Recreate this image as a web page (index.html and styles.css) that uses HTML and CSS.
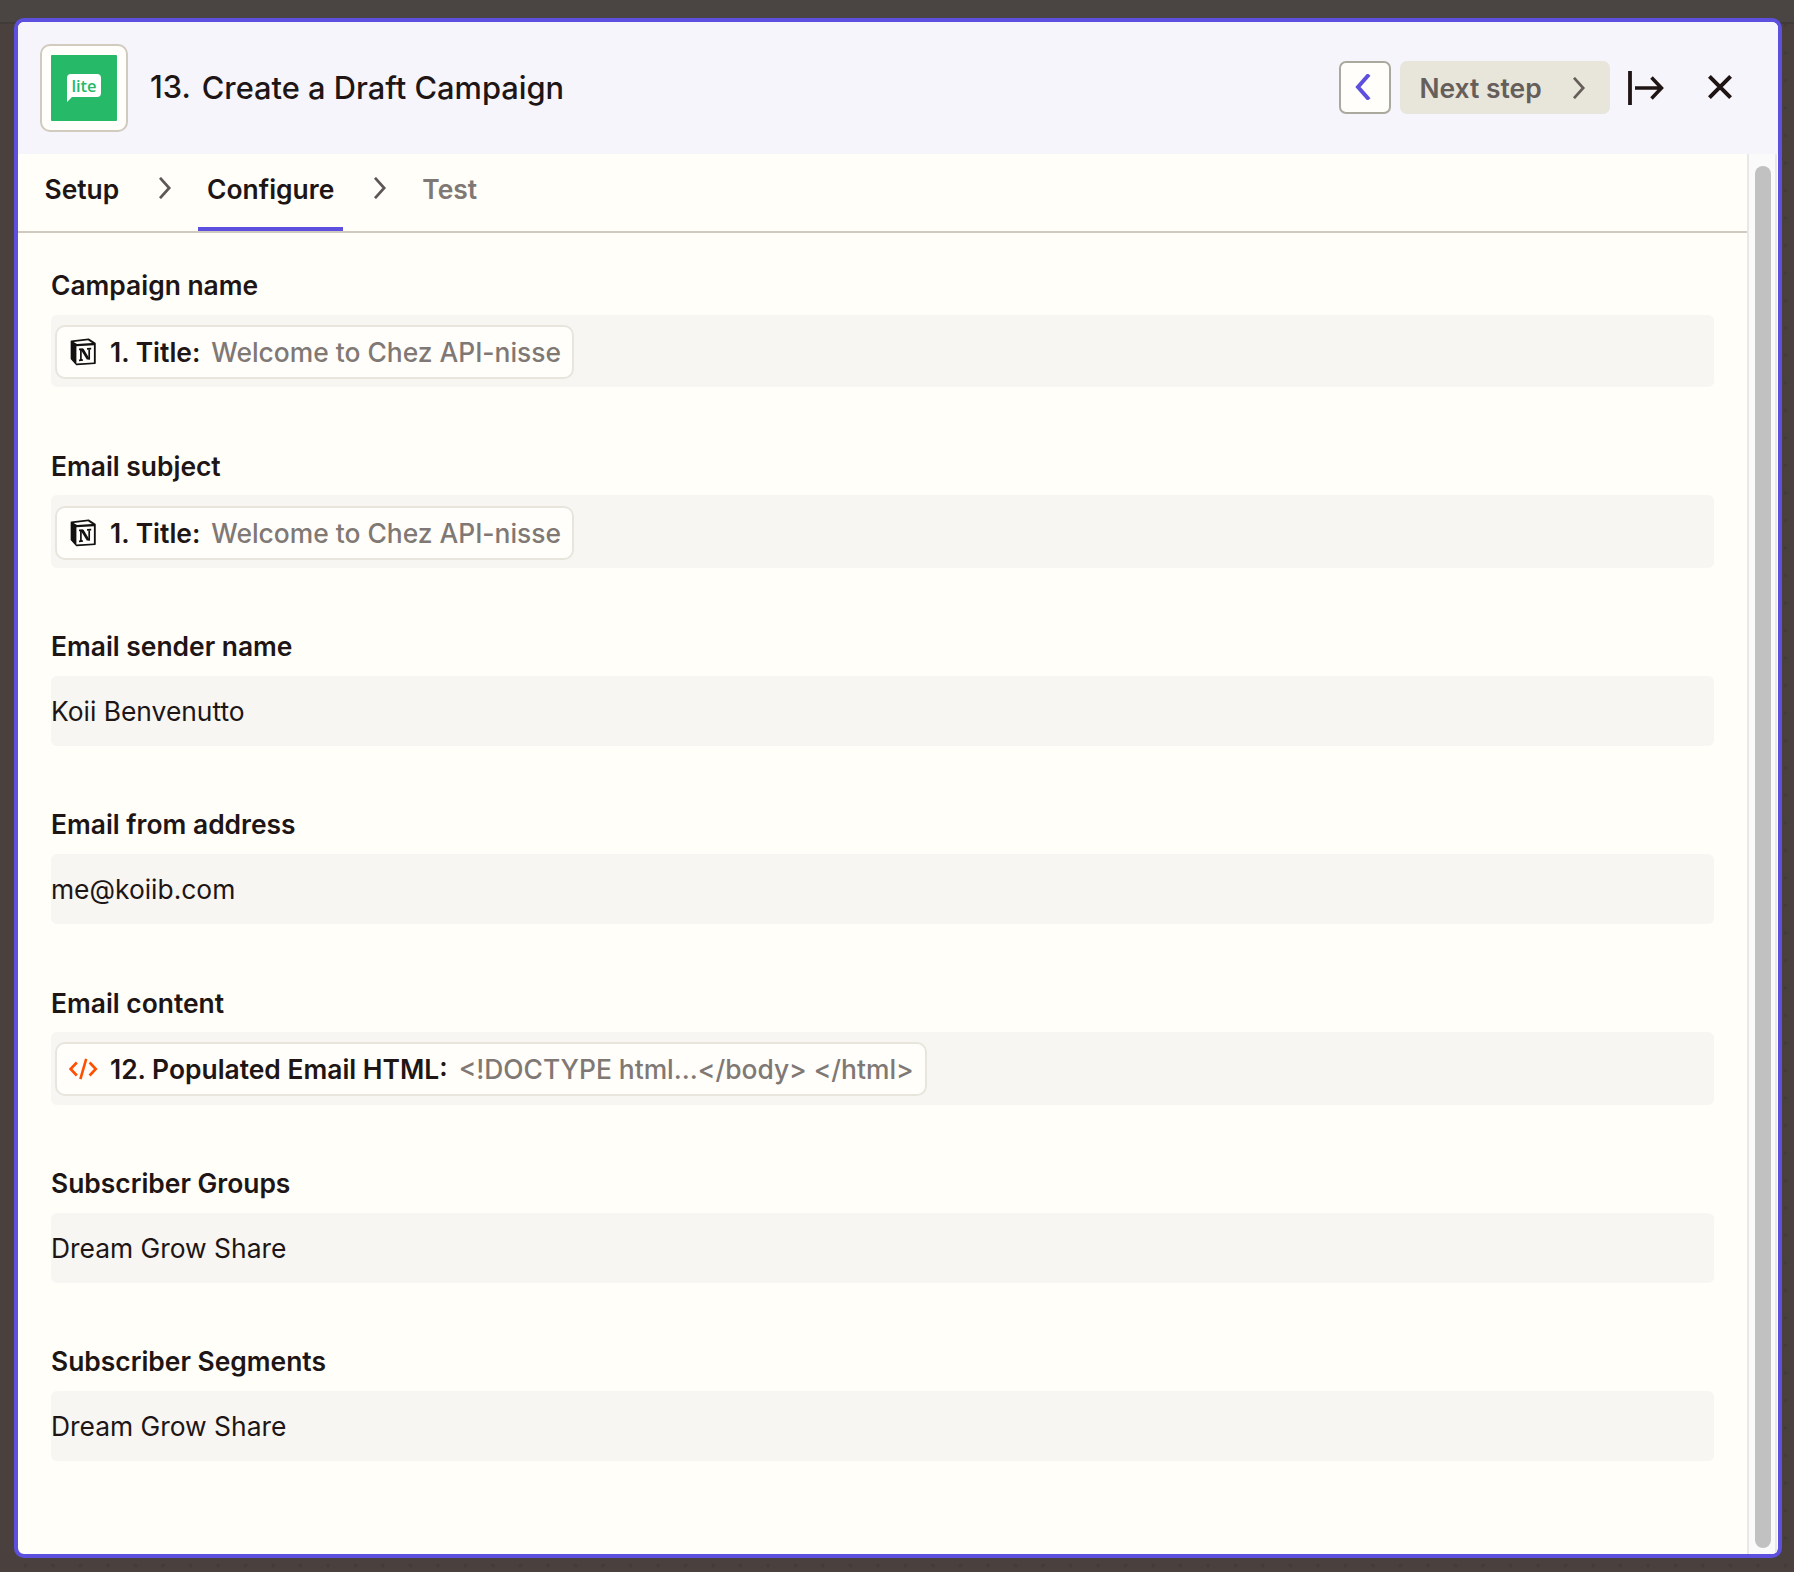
FILE: index.html
```html
<!DOCTYPE html>
<html lang="en">
<head>
<meta charset="utf-8">
<title>Create a Draft Campaign</title>
<link rel="stylesheet" href="styles.css">
</head>
<body>
<svg class="defs" aria-hidden="true">
  <symbol id="chevron" viewBox="0 0 14 22"><path d="M2 .8 11.200 11 2 21.200" fill="none" stroke="currentColor" stroke-width="2.700"/></symbol>
  <symbol id="notion" viewBox="0 0 26 28">
    <path d="M1.400 3.200 18.500 1.200 25 5.400V25.200L6.600 26.600 1.400 20.800Z" fill="#111" stroke="#111" stroke-width="1.500" stroke-linejoin="round"/>
    <path d="M3.600 3.900 18 2.200 22 4.900 7 6Z" fill="#fffefa"/>
    <path d="M6.400 8.200 23.900 7.200V24.400L6.400 25.500Z" fill="#fffefa"/>
    <path d="M9 11.300h4M10.900 11.300V22.200M9 22.300l4-.3M17 10.800l4.200-.2M19.200 10.800V21.400" fill="none" stroke="#111" stroke-width="1.700"/>
    <path d="M10.200 10.700h3.400l6.400 10.800h-3.200Z" fill="#111"/>
  </symbol>
</svg>
<main class="panel">
  <header class="panel-header">
    <div class="app-tile"><div class="app-logo">
      <svg width="36" height="30" viewBox="0 0 36 30"><path d="M5 1H31Q35 1 35 5V20Q35 24 31 24H6L1 29V5Q1 1 5 1Z" fill="#fff"/></svg>
      <span class="app-word">lite</span>
    </div></div>
    <h1 class="title"><span class="step-number">13.</span><span>Create a Draft Campaign</span></h1>
    <div class="actions">
      <button class="back" aria-label="Previous step"><svg width="16" height="26" viewBox="0 0 16 26"><path d="M14 .5 3 13 14 25.500" fill="none" stroke="currentColor" stroke-width="4"/></svg></button>
      <button class="next"><span>Next step</span><svg width="14" height="22"><use href="#chevron"/></svg></button>
      <svg class="dock" width="36" height="34" viewBox="0 0 36 34"><path d="M2 0V34" stroke="currentColor" stroke-width="3.800"/><path d="M7 17H34M23.500 6.500 33.500 17 23.500 27.500" fill="none" stroke="currentColor" stroke-width="3.500"/></svg>
      <svg class="close" width="24" height="24" viewBox="0 0 24 24"><path d="M1.400 1.400 22.600 22.600M22.600 1.400 1.400 22.600" stroke="currentColor" stroke-width="4"/></svg>
    </div>
  </header>
  <div class="panel-body">
    <div class="content">
      <nav class="tabs">
        <span class="tab">Setup</span>
        <svg class="tab-sep" width="14" height="22"><use href="#chevron"/></svg>
        <span class="tab active">Configure</span>
        <svg class="tab-sep" width="14" height="22"><use href="#chevron"/></svg>
        <span class="tab muted">Test</span>
      </nav>
      <div class="fields">
        <section class="field"><h2>Campaign name</h2><div class="value mapped"><div class="chip"><svg width="26" height="28"><use href="#notion"/></svg><b>1. Title:</b><span>Welcome to Chez API-nisse</span></div></div></section>
        <section class="field snug"><h2>Email subject</h2><div class="value mapped"><div class="chip"><svg width="26" height="28"><use href="#notion"/></svg><b>1. Title:</b><span>Welcome to Chez API-nisse</span></div></div></section>
        <section class="field"><h2>Email sender name</h2><div class="value">Koii Benvenutto</div></section>
        <section class="field"><h2>Email from address</h2><div class="value">me@koiib.com</div></section>
        <section class="field snug"><h2>Email content</h2><div class="value mapped"><div class="chip"><svg class="code" width="30" height="22" viewBox="0 0 30 22"><path d="M8.800 4.500 2.600 11l6.200 6.500M21.600 4.500l6.200 6.500-6.200 6.500M18.200 .8 12.400 21.200" fill="none" stroke="currentColor" stroke-width="2.600"/></svg><b>12. Populated Email HTML:</b><span>&lt;!DOCTYPE html...&lt;/body&gt; &lt;/html&gt;</span></div></div></section>
        <section class="field"><h2>Subscriber Groups</h2><div class="value">Dream Grow Share</div></section>
        <section class="field"><h2>Subscriber Segments</h2><div class="value">Dream Grow Share</div></section>
      </div>
    </div>
    <div class="scrollbar"><div class="thumb"></div></div>
  </div>
</main>
</body>
</html>
```
FILE: styles.css
```css
* { box-sizing: border-box; }
body {
  margin: 0;
  height: 1572px;
  padding: 18px 12px 14px 14px;
  overflow: hidden;
  font: 400 26.4px/32px Inter, "Liberation Sans", sans-serif;
  color: #201515;
  background:
    linear-gradient(#4a4542 0 22px, #413c3a 22px 24px, transparent 24px),
    radial-gradient(circle, #403b3a 1.2px, transparent 2px) 11.75px 11.75px / 27.5px 27.5px,
    #4a403e;
}
.defs { display: none; }
svg { display: block; flex: none; }
.panel {
  display: flex;
  flex-direction: column;
  height: 1540px;
  border: 4px solid #5e50df;
  border-radius: 10px;
  overflow: hidden;
  background: #fffef9;
}
.panel-header {
  display: flex;
  align-items: center;
  height: 132px;
  flex: none;
  padding: 0 46px 0 22px;
  background: #f6f5fc;
}
.app-tile {
  display: grid;
  place-items: center;
  width: 88px;
  height: 88px;
  border: 2px solid #d0cabf;
  border-radius: 10px;
  background: #fffefa;
}
.app-logo {
  display: grid;
  place-items: center;
  width: 66px;
  height: 66px;
  border-radius: 1px;
  background: #26b967;
}
.app-logo > * { grid-area: 1 / 1; }
.app-word {
  margin-top: -5px;
  font: 600 16.5px/20px "Open Sans", sans-serif;
  color: #26b967;
}
.title {
  display: flex;
  gap: 11px;
  margin: 0 auto 0 22px;
  font-size: 30.8px;
  line-height: 40px;
  font-weight: 500;
}
.step-number { margin-top: -1px; }
.actions { display: flex; align-items: center; padding-bottom: 2px; }
button { font: inherit; margin: 0; padding: 0; }
.back {
  display: grid;
  place-items: center;
  width: 52px;
  height: 53px;
  padding-right: 5px;
  border: 2px solid #aba89d;
  border-radius: 7px;
  background: #fffefa;
  color: #5e50df;
}
.next {
  display: flex;
  align-items: center;
  justify-content: space-between;
  width: 210px;
  height: 53px;
  margin-left: 9px;
  padding: 1px 24px 0 19.5px;
  border: 0;
  border-radius: 7px;
  background: #e8e5da;
  color: #665e5b;
  font-weight: 600;
}
.dock { margin: 2px 0 0 18px; }
.close { margin-left: 44px; }
.panel-body { display: flex; flex: 1; }
.content { flex: 1; }
.tabs {
  display: flex;
  height: 79px;
  padding-left: 26.5px;
  border-bottom: 2px solid #d0cabf;
  font-weight: 600;
}
.tab { padding-top: 19px; height: 77px; }
.tab.active { padding: 19px 9px 0; border-bottom: 4px solid #5e50df; }
.tab.muted { color: #807874; }
.tab-sep { margin: 22.5px 26.5px 0 38.4px; color: #5f5757; }
.tab.active + .tab-sep { margin: 22.5px 35.5px 0 29.6px; }
.fields { padding: 36px 33px 0; }
.field { margin-bottom: 62px; }
.field h2 {
  margin: 0 0 14px;
  font-size: inherit;
  line-height: 32px;
  font-weight: 600;
}
.field.snug h2 { padding-top: 1px; margin-bottom: 13px; }
.value {
  display: flex;
  align-items: center;
  height: 70.2px;
  border-radius: 6px;
  background: #f7f6f2;
}
.value.mapped { height: 72.4px; padding: 2px 0 0 4px; }
.chip {
  display: flex;
  align-items: center;
  height: 54px;
  padding: 0 11px 0 13px;
  border: 2px solid #e8e6dc;
  border-radius: 10px;
  background: #fffefa;
}
.chip b { margin: 0 11px 0 14px; font-weight: 600; }
.chip span { color: #807874; font-weight: 500; }
.chip .code { margin: 0 -2px; color: #ff4f00; }
.scrollbar {
  width: 30px;
  margin-right: 1px;
  padding: 12px 4px 6px 6px;
  border: solid #e8e8e8;
  border-width: 0 2px;
  background: #fafafa;
}
.thumb { width: 16px; height: 100%; border-radius: 8px; background: #c1c1c1; }
```
